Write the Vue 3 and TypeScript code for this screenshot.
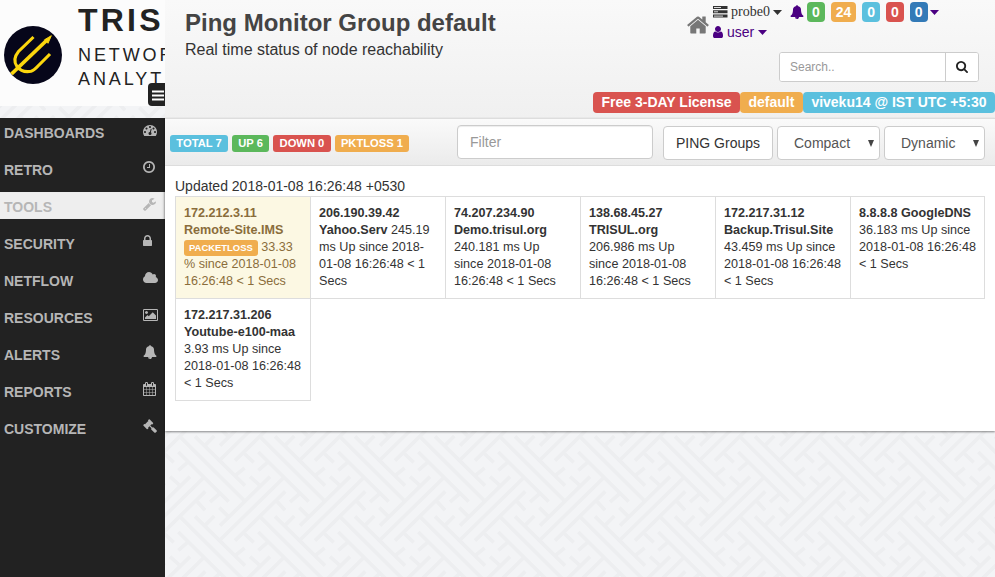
<script setup lang="ts">
import { ref } from 'vue'

interface MenuItem {
  label: string
  icon: string
  box: string
  width: number
  active?: boolean
}

interface PingNode {
  ip: string
  name: string
  text: string
  loss?: boolean
}

const menu: MenuItem[] = [
  { label: 'DASHBOARDS', width: 14, box: '0 0 1792 1792', icon: 'M384 1152q0-53-37.5-90.5t-90.5-37.5-90.5 37.5-37.5 90.5 37.5 90.5 90.5 37.5 90.5-37.5 37.5-90.5zm192-448q0-53-37.5-90.5t-90.5-37.5-90.5 37.5-37.5 90.5 37.5 90.5 90.5 37.5 90.5-37.5 37.5-90.5zm428 481l101-382q6-26-7.5-48.5t-38.5-29.5-48 6.5-30 39.5l-101 382q-60 5-107 43.5t-63 98.5q-20 77 20 146t117 89 146-20 89-117q16-60-6-117t-72-91zm660-33q0-53-37.5-90.5t-90.5-37.5-90.5 37.5-37.5 90.5 37.5 90.5 90.5 37.5 90.5-37.5 37.5-90.5zm-640-640q0-53-37.5-90.5t-90.5-37.5-90.5 37.5-37.5 90.5 37.5 90.5 90.5 37.5 90.5-37.5 37.5-90.5zm448 192q0-53-37.5-90.5t-90.5-37.5-90.5 37.5-37.5 90.5 37.5 90.5 90.5 37.5 90.5-37.5 37.5-90.5zm320 448q0 261-141 483-19 29-54 29h-1402q-35 0-54-29-141-221-141-483 0-182 71-348t191-286 286-191 348-71 348 71 286 191 191 286 71 348z' },
  { label: 'RETRO', width: 12, box: '128 0 1536 1792', icon: 'M1024 544v448q0 14-9 23t-23 9h-320q-14 0-23-9t-9-23v-64q0-14 9-23t23-9h224v-352q0-14 9-23t23-9h64q14 0 23 9t9 23zm416 352q0-148-73-273t-198-198-273-73-273 73-198 198-73 273 73 273 198 198 273 73 273-73 198-198 73-273zm224 0q0 209-103 385.5t-279.5 279.5-385.5 103-385.5-103-279.5-279.5-103-385.5 103-385.5 279.5-279.5 385.5-103 385.5 103 279.5 279.5 103 385.5z' },
  { label: 'TOOLS', active: true, width: 13, box: '64 0 1664 1792', icon: 'M448 1472q0-26-19-45t-45-19-45 19-19 45 19 45 45 19 45-19 19-45zm644-420l-682 682q-37 37-90 37-52 0-91-37l-106-108q-38-36-38-90 0-53 38-91l681-681q39 98 114.5 173.5t173.5 114.5zm634-435q0 39-23 106-47 134-164.5 217.5t-258.5 83.5q-185 0-316.5-131.5t-131.5-316.5 131.5-316.5 316.5-131.5q58 0 121.5 16.5t107.5 46.5q16 11 16 28t-16 28l-293 169v224l193 107q5-3 79-48.5t135.5-81 70.5-35.5q15 0 23.5 10t8.5 25z' },
  { label: 'SECURITY', width: 9, box: '320 0 1152 1792', icon: 'M640 768h512v-192q0-106-75-181t-181-75-181 75-75 181v192zm832 96v576q0 40-28 68t-68 28h-960q-40 0-68-28t-28-68v-576q0-40 28-68t68-28h32v-192q0-184 132-316t316-132 316 132 132 316v192h32q40 0 68 28t28 68z' },
  { label: 'NETFLOW', width: 15, box: '64 0 1920 1792', icon: 'M1984 1152q0 159-112.5 271.5t-271.5 112.5h-1088q-185 0-316.5-131.5t-131.5-316.5q0-132 71-241.5t187-163.5q-2-28-2-43 0-212 150-362t362-150q158 0 286.5 88t187.5 230q70-62 166-62 106 0 181 75t75 181q0 75-41 138 129 30 213 134.5t84 239.5z' },
  { label: 'RESOURCES', width: 15, box: '-64 0 1920 1792', icon: 'M576 576q0 80-56 136t-136 56-136-56-56-136 56-136 136-56 136 56 56 136zm1024 384v448h-1408v-192l320-320 160 160 512-512zm96-704h-1600q-13 0-22.5 9.5t-9.5 22.5v1216q0 13 9.5 22.5t22.5 9.5h1600q13 0 22.5-9.5t9.5-22.5v-1216q0-13-9.5-22.5t-22.5-9.5zm160 32v1216q0 66-47 113t-113 47h-1600q-66 0-113-47t-47-113v-1216q0-66 47-113t113-47h1600q66 0 113 47t47 113z' },
  { label: 'ALERTS', width: 14, box: '0 0 1792 1792', icon: 'M912 1696q0-16-16-16-59 0-101.5-42.5t-42.5-101.5q0-16-16-16t-16 16q0 73 51.5 124.5t124.5 51.5q16 0 16-16zm816-288q0 52-38 90t-90 38h-448q0 106-75 181t-181 75-181-75-75-181h-448q-52 0-90-38t-38-90q50-42 91-88t85-119.5 74.5-158.5 50-206 19.5-260q0-152 117-282.5t307-158.5q-8-19-8-39 0-40 28-68t68-28 68 28 28 68q0 20-8 39 190 28 307 158.5t117 282.5q0 139 19.5 260t50 206 74.5 158.5 85 119.5 91 88z' },
  { label: 'REPORTS', width: 13, box: '64 0 1664 1792', icon: 'M192 1664h288v-288h-288v288zm352 0h320v-288h-320v288zm-352-352h288v-320h-288v320zm352 0h320v-320h-320v320zm-352-384h288v-288h-288v288zm736 736h320v-288h-320v288zm-384-736h320v-288h-320v288zm768 736h288v-288h-288v288zm-384-352h320v-320h-320v320zm-352-864v-288q0-13-9.5-22.5t-22.5-9.5h-64q-13 0-22.5 9.5t-9.5 22.5v288q0 13 9.5 22.5t22.5 9.5h64q13 0 22.5-9.5t9.5-22.5zm736 864h288v-320h-288v320zm-384-384h320v-288h-320v288zm384 0h288v-288h-288v288zm32-480v-288q0-13-9.5-22.5t-22.5-9.5h-64q-13 0-22.5 9.5t-9.5 22.5v288q0 13 9.5 22.5t22.5 9.5h64q13 0 22.5-9.5t9.5-22.5zm384-64v1280q0 52-38 90t-90 38h-1408q-52 0-90-38t-38-90v-1280q0-52 38-90t90-38h128v-96q0-66 47-113t113-47h64q66 0 113 47t47 113v96h384v-96q0-66 47-113t113-47h64q66 0 113 47t47 113v96h128q52 0 90 38t38 90z' },
  { label: 'CUSTOMIZE', width: 14, box: '0 0 1792 1792', icon: 'M1771 1536q0 53-37 90l-107 108q-39 37-91 37-53 0-90-37l-363-364q-38-36-38-90 0-53 43-96l-256-256-126 126q-14 14-34 14t-34-14q2 2 12.5 12t12.5 13 10 11.5 10 13.5 6 13.5 5.5 16.5 1.5 18q0 38-28 68-3 3-16.5 18t-19 20.5-18.5 16.5-22 15.5-22 9-26 4.5q-40 0-68-28l-408-408q-28-28-28-68 0-13 4.5-26t9-22 15.5-22 16.5-18.5 20.5-19 18-16.5q30-28 68-28 10 0 18 1.5t16.5 5.5 13.5 6 13.5 10 11.5 10 13 12.5 12 12.5q-14-14-14-34t14-34l348-348q14-14 34-14t34 14q-2-2-12.5-12t-12.5-13-10-11.5-10-13.5-6-13.5-5.5-16.5-1.5-18q0-38 28-68 3-3 16.5-18t19-20.5 18.5-16.5 22-15.5 22-9 26-4.5q40 0 68 28l408 408q28 28 28 68 0 13-4.5 26t-9 22-15.5 22-16.5 18.5-20.5 19-18 16.5q-30 28-68 28-10 0-18-1.5t-16.5-5.5-13.5-6-13.5-10-11.5-10-13-12.5-12-12.5q14 14 14 34t-14 34l-126 126 256 256q43-43 96-43 52 0 91 37l363 363q37 39 37 91z' },
]

const bellIcon = menu[6].icon

const nodes: PingNode[] = [
  { ip: '172.212.3.11', name: 'Remote-Site.IMS', text: '33.33 % since 2018-01-08 16:26:48 < 1 Secs', loss: true },
  { ip: '206.190.39.42', name: 'Yahoo.Serv', text: '245.19 ms Up since 2018-01-08 16:26:48 < 1 Secs' },
  { ip: '74.207.234.90', name: 'Demo.trisul.org', text: '240.181 ms Up since 2018-01-08 16:26:48 < 1 Secs' },
  { ip: '138.68.45.27', name: 'TRISUL.org', text: '206.986 ms Up since 2018-01-08 16:26:48 < 1 Secs' },
  { ip: '172.217.31.12', name: 'Backup.Trisul.Site', text: '43.459 ms Up since 2018-01-08 16:26:48 < 1 Secs' },
  { ip: '8.8.8.8', name: 'GoogleDNS', text: '36.183 ms Up since 2018-01-08 16:26:48 < 1 Secs' },
  { ip: '172.217.31.206', name: 'Youtube-e100-maa', text: '3.93 ms Up since 2018-01-08 16:26:48 < 1 Secs' },
]

const alerts = [
  { count: 0, tone: 'green' },
  { count: 24, tone: 'orange' },
  { count: 0, tone: 'cyan' },
  { count: 0, tone: 'red' },
  { count: 0, tone: 'blue' },
]

const totals = [
  { text: 'TOTAL 7', tone: 'cyan' },
  { text: 'UP 6', tone: 'green' },
  { text: 'DOWN 0', tone: 'red' },
  { text: 'PKTLOSS 1', tone: 'orange' },
]

const filter = ref('')
const search = ref('')
</script>

<template>
  <div class="page">
    <svg class="backdrop" width="995" height="577">
      <defs>
        <pattern id="weave" width="80" height="80" patternUnits="userSpaceOnUse" patternTransform="translate(5 20)">
          <g v-for="n in 9" :key="n" :transform="`translate(${((n - 1) % 3 - 1) * 80} ${(Math.floor((n - 1) / 3) - 1) * 80})`">
            <path
              transform="scale(.33333)" fill="none" stroke="#edeef0" stroke-width="11"
              d="M90 49L240 197M47 52L236 240M40 96L191 245M165 317L315 170M165 360L355 174M210 362L361 214M120 76L148 48M209 168L239 144M40 151L71 124M135 246L165 220M15 170L43 195M163 263L190 290M95 243L120 271M235 98L266 127"
            />
          </g>
        </pattern>
      </defs>
      <rect width="995" height="577" fill="#f3f4f6" />
      <rect width="995" height="577" fill="url(#weave)" />
    </svg>

    <aside class="sidebar">
      <div class="brand">
        <svg class="logo" viewBox="0 0 58 58" width="58" height="58">
          <circle cx="29" cy="29" r="29" fill="#06061a" />
          <g fill="none" stroke="#fbd60d" stroke-width="3.1">
            <path d="M7.5 48L43 14" stroke-width="3.8" />
            <path d="M40.5 13.8L47.3 9.7L44 17.3Z" fill="#fbd60d" stroke-width="1" />
            <path d="M29.5 11L14.5 25.5Q8 33.5 13 40.5Q18 47 27 45.3Q30 44.5 34 40L46 28" />
          </g>
        </svg>
        <div class="brand-text">
          <div class="brand-name">TRIS<span class="gold">U</span>L</div>
          <div class="brand-sub">NETWORK<br>ANALYTICS</div>
        </div>
        <div class="toggle">
          <svg width="12" height="11" viewBox="0 0 12 11"><path d="M0 1.5H12M0 5.5H12M0 9.5H12" stroke="#fff" stroke-width="2" /></svg>
        </div>
      </div>
      <nav class="menu">
        <div v-for="item in menu" :key="item.label" class="menu-item" :class="{ active: item.active }">
          <span>{{ item.label }}</span>
          <span class="menu-icon">
            <svg :viewBox="item.box" :width="item.width" height="14"><path :d="item.icon" fill="currentColor" fill-rule="evenodd" /></svg>
          </span>
        </div>
      </nav>
    </aside>

    <main class="main">
      <header class="header">
        <div class="titles">
          <h1>Ping Monitor Group default</h1>
          <p>Real time status of node reachability</p>
        </div>
        <div class="tools">
          <div class="account">
            <svg class="home" width="24" height="24" viewBox="0 0 1792 1792"><path fill="#777" d="M1472 992v480q0 26-19 45t-45 19h-384v-384h-256v384h-384q-26 0-45-19t-19-45v-480q0-1 .5-3t.5-3l575-474 575 474q1 2 1 6zm223-69l-62 74q-8 9-21 11h-3q-13 0-21-7l-692-577-692 577q-12 8-24 7-13-2-21-11l-62-74q-8-10-7-23.5t11-21.5l719-599q32-26 76-26t76 26l244 204v-195q0-14 9-23t23-9h192q14 0 23 9t9 23v408l219 182q10 8 11 21.5t-7 23.5z" /></svg>
            <div class="account-lines">
              <div class="line">
                <svg class="server" width="15" height="12" viewBox="0 0 15 12">
                  <path d="M0 0H14.5V3H0ZM0 4.3H14.5V7.3H0ZM0 8.6H14.5V11.6H0Z" fill="#333" />
                  <path d="M1 1.5H8M1 5.8H5M1 10.1H10" stroke="#eee" stroke-width=".9" />
                </svg>
                <span class="probe">probe0</span>
                <svg class="caret dark" width="9" height="5" viewBox="0 0 9 5"><path d="M0 0H9L4.5 5Z" fill="currentColor" /></svg>
                <svg class="bell" width="14" height="14" viewBox="0 0 1792 1792"><path :d="bellIcon" fill="#4b0082" /></svg>
                <div class="counts">
                  <span v-for="(a, i) in alerts" :key="i" class="count" :class="a.tone">{{ a.count }}</span>
                </div>
                <svg class="caret last" width="9" height="5" viewBox="0 0 9 5"><path d="M0 0H9L4.5 5Z" fill="currentColor" /></svg>
              </div>
              <div class="line user">
                <svg width="10" height="14" viewBox="256 0 1280 1792"><path fill="currentColor" d="M1536 1399q0 109-62.5 187t-150.5 78h-854q-88 0-150.5-78t-62.5-187q0-85 8.5-160.5t31.5-152 58.5-131 94-89 134.5-34.5q131 128 313 128t313-128q76 0 134.5 34.5t94 89 58.5 131 31.5 152 8.5 160.5zm-256-887q0 159-112.5 271.5t-271.5 112.5-271.5-112.5-112.5-271.5 112.5-271.5 271.5-112.5 271.5 112.5 112.5 271.5z" /></svg>
                <span>user</span>
                <svg class="caret" width="9" height="5" viewBox="0 0 9 5"><path d="M0 0H9L4.5 5Z" fill="currentColor" /></svg>
              </div>
            </div>
          </div>
          <div class="search">
            <input v-model="search" type="text" placeholder="Search..">
            <button type="button">
              <svg width="12" height="12" viewBox="64 128 1664 1664"><path fill="#222" d="M1216 832q0-185-131.5-316.5t-316.5-131.5-316.5 131.5-131.5 316.5 131.5 316.5 316.5 131.5 316.5-131.5 131.5-316.5zm512 832q0 52-38 90t-90 38q-54 0-90-38l-343-342q-179 124-399 124-143 0-273.5-55.5t-225-150-150-225-55.5-273.5 55.5-273.5 150-225 225-150 273.5-55.5 273.5 55.5 225 150 150 225 55.5 273.5q0 220-124 399l343 343q37 37 37 90z" /></svg>
            </button>
          </div>
          <div class="status">
            <span class="tag red">Free 3-DAY License</span>
            <span class="tag orange">default</span>
            <span class="tag cyan">viveku14 @ IST UTC +5:30</span>
          </div>
        </div>
      </header>

      <section class="panel">
        <div class="toolbar">
          <div class="totals">
            <span v-for="t in totals" :key="t.text" class="label" :class="t.tone">{{ t.text }}</span>
          </div>
          <input v-model="filter" class="filter" type="text" placeholder="Filter">
          <button class="btn groups" type="button">PING Groups</button>
          <button class="btn select compact" type="button">Compact<i class="arrow"></i></button>
          <button class="btn select dynamic" type="button">Dynamic<i class="arrow"></i></button>
        </div>
        <div class="content">
          <div class="updated">Updated 2018-01-08 16:26:48 +0530</div>
          <div class="grid">
            <div v-for="n in nodes" :key="n.ip" class="cell" :class="{ loss: n.loss }">
              <b>{{ n.ip }} {{ n.name }}</b>{{ ' ' }}<template v-if="n.loss"><span class="mini">PACKETLOSS</span>{{ ' ' }}</template>{{ n.text }}
            </div>
          </div>
        </div>
      </section>
    </main>
  </div>
</template>

<style>
body {
  margin: 0;
  overflow: hidden;
}
</style>

<style scoped>
* {
  box-sizing: border-box;
}
.page {
  position: relative;
  display: flex;
  width: 995px;
  height: 577px;
  overflow: hidden;
  font-family: "Liberation Sans", Arial, sans-serif;
  font-size: 14px;
  line-height: 20px;
  color: #333;
}
.backdrop {
  position: absolute;
  inset: 0;
}
svg {
  display: block;
  flex: none;
}
.green { background: #5cb85c; }
.orange { background: #f0ad4e; }
.cyan { background: #5bc0de; }
.red { background: #d9534f; }
.blue { background: #337ab7; }

.sidebar {
  position: relative;
  display: flex;
  flex-direction: column;
  gap: 12px;
  width: 165px;
  flex: none;
}
.brand {
  position: relative;
  display: flex;
  height: 106px;
  padding-left: 4px;
  overflow: hidden;
  background: #fcfcfc;
}
.logo {
  margin-top: 26px;
}
.brand-text {
  margin-left: 16px;
  white-space: nowrap;
  color: #222;
}
.brand-name {
  margin-top: 2px;
  font-size: 32px;
  line-height: 36px;
  font-weight: bold;
  letter-spacing: 3.2px;
}
.gold {
  color: #fbd60d;
}
.brand-sub {
  margin-top: 5px;
  font-size: 18px;
  line-height: 24px;
  letter-spacing: 2.9px;
}
.toggle {
  position: absolute;
  right: 0;
  bottom: 0;
  width: 17px;
  height: 23px;
  padding: 7px 0 0 4px;
  background: #222;
  border-radius: 4px 0 0 4px;
  overflow: hidden;
}
.menu {
  flex: 1;
  display: flex;
  flex-direction: column;
  gap: 10px;
  background: #222;
}
.menu-item {
  display: flex;
  justify-content: space-between;
  height: 27px;
  padding: 5px 0 0 4px;
  font-weight: bold;
  color: #b6b6b6;
}
.menu-item.active {
  background: #eee;
  box-shadow: inset -3px 0 3px -2px #bbb;
}
.menu-icon {
  width: 22px;
}

.main {
  position: relative;
  flex: 1;
  min-width: 0;
}
.header {
  display: flex;
  justify-content: space-between;
  height: 118px;
  background: linear-gradient(#f9f9f9, #f0f0f0);
}
.titles {
  padding: 9px 0 0 20px;
}
h1 {
  margin: 0;
  font-size: 24px;
  line-height: 28px;
  color: #444;
}
p {
  margin: 3px 0 0;
  font-size: 16px;
  line-height: 20px;
}
.tools {
  display: flex;
  flex-direction: column;
  align-items: flex-end;
}
.account {
  display: flex;
  width: 309px;
  height: 52px;
}
.home {
  margin-top: 12.5px;
}
.account-lines {
  margin-left: 3px;
  padding-top: 2px;
}
.line {
  display: flex;
  align-items: center;
  height: 20px;
  color: #4b0082;
}
.probe {
  margin: 0 3px;
  font-family: "Liberation Serif", serif;
  font-size: 14px;
  color: #333;
}
.dark {
  color: #333;
}
.bell {
  margin-left: 8px;
}
.counts {
  display: flex;
  gap: 6px;
  margin: 0 2.5px 0 3px;
}
.count {
  height: 20px;
  padding: 0 5px;
  border-radius: 4px;
  font-weight: bold;
  color: #fff;
}
.user {
  gap: 4px;
}
.search {
  display: flex;
  width: 200px;
  height: 30px;
  margin-right: 16px;
  border: 1px solid #ccc;
  border-radius: 3px;
  background: #fff;
  overflow: hidden;
}
input {
  font-family: inherit;
  outline: none;
  color: #555;
}
input::placeholder {
  color: #999;
}
.search input {
  width: 166px;
  padding: 0 10px;
  border: 0;
  border-right: 1px solid #ccc;
  font-size: 12px;
}
.search button {
  display: flex;
  flex: 1;
  align-items: center;
  justify-content: center;
  padding: 0;
  border: 0;
  background: #fff;
}
.status {
  display: flex;
  margin-top: 10px;
}
.tag {
  height: 21px;
  padding: 0 8.5px;
  border-radius: 4px;
  font-weight: bold;
  line-height: 21px;
  color: #fff;
  white-space: nowrap;
}

.panel {
  height: 313px;
  background: #fff;
  box-shadow: 0 1px 2px rgba(0, 0, 0, .45);
}
.toolbar {
  display: flex;
  height: 48px;
  padding: 6px 10px 0 5px;
  border-top: 1px solid #ddd;
  border-bottom: 1px solid #ddd;
  background: linear-gradient(#fafafa, #ebebeb);
}
.totals {
  display: flex;
  gap: 4px;
  width: 287px;
  padding-top: 10px;
}
.label {
  height: 17px;
  padding: 0 6.3px;
  border-radius: 3px;
  font-size: 11.2px;
  font-weight: bold;
  line-height: 17px;
  color: #fff;
}
.filter {
  width: 196px;
  height: 34px;
  padding: 0 12px;
  border: 1px solid #ccc;
  border-radius: 4px;
  box-shadow: inset 0 1px 1px rgba(0, 0, 0, .075);
  font-size: 14px;
}
.btn {
  height: 34px;
  margin: 1px 0 0 4px;
  padding: 0 12px;
  border: 1px solid #ccc;
  border-radius: 4px;
  background: #fff;
  font-family: inherit;
  font-size: 14px;
  color: #333;
}
.groups {
  width: 110px;
  margin-left: 10px;
  white-space: nowrap;
}
.select {
  display: flex;
  align-items: center;
  justify-content: space-between;
  padding: 0 5px 0 16px;
  color: #555;
}
.compact {
  width: 103px;
}
.dynamic {
  width: 101px;
}
.arrow {
  margin-top: 1px;
  border: 3px solid transparent;
  border-top: 7px solid #444;
  border-bottom: 0;
}
.content {
  padding: 10px 10px 0;
}
.updated {
  height: 20px;
}
.grid {
  display: grid;
  grid-template-columns: repeat(6, 135px);
  grid-auto-rows: 102px;
}
.cell {
  width: 136px;
  height: 103px;
  padding: 8px;
  border: 1px solid #ddd;
  font-size: 12.6px;
  line-height: 17px;
}
.cell:nth-child(6n) {
  width: 135px;
}
.cell.loss {
  background: #fcf8e3;
  color: #8a6d3b;
}
.mini {
  padding: 2px 5px 3px;
  border-radius: 3px;
  background: #f0ad4e;
  font-size: 9.45px;
  font-weight: bold;
  line-height: 10px;
  color: #fff;
}
</style>
